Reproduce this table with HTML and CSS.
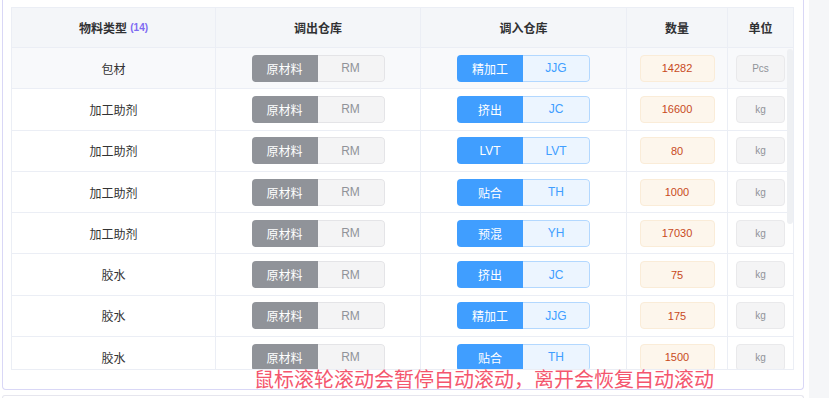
FILE: index.html
```html
<!DOCTYPE html>
<html lang="zh-CN">
<head>
<meta charset="utf-8">
<title>物料调拨</title>
<link rel="stylesheet" href="styles.css">
</head>
<body>
<div class="page">
  <div class="main">
    <section class="panel">
      <div class="table">
        <div class="thead">
          <div class="th">物料类型 <span class="count">(14)</span></div>
          <div class="th">调出仓库</div>
          <div class="th">调入仓库</div>
          <div class="th">数量</div>
          <div class="th">单位</div>
        </div>
        <div class="tbody">
          <div class="tr hover">
            <div class="td">包材</div>
            <div class="td"><span class="pair gray"><span class="l">原材料</span><span class="r">RM</span></span></div>
            <div class="td"><span class="pair blue"><span class="l">精加工</span><span class="r">JJG</span></span></div>
            <div class="td"><span class="qty">14282</span></div>
            <div class="td"><span class="unit">Pcs</span></div>
          </div>
          <div class="tr">
            <div class="td">加工助剂</div>
            <div class="td"><span class="pair gray"><span class="l">原材料</span><span class="r">RM</span></span></div>
            <div class="td"><span class="pair blue"><span class="l">挤出</span><span class="r">JC</span></span></div>
            <div class="td"><span class="qty">16600</span></div>
            <div class="td"><span class="unit">kg</span></div>
          </div>
          <div class="tr">
            <div class="td">加工助剂</div>
            <div class="td"><span class="pair gray"><span class="l">原材料</span><span class="r">RM</span></span></div>
            <div class="td"><span class="pair blue"><span class="l">LVT</span><span class="r">LVT</span></span></div>
            <div class="td"><span class="qty">80</span></div>
            <div class="td"><span class="unit">kg</span></div>
          </div>
          <div class="tr">
            <div class="td">加工助剂</div>
            <div class="td"><span class="pair gray"><span class="l">原材料</span><span class="r">RM</span></span></div>
            <div class="td"><span class="pair blue"><span class="l">贴合</span><span class="r">TH</span></span></div>
            <div class="td"><span class="qty">1000</span></div>
            <div class="td"><span class="unit">kg</span></div>
          </div>
          <div class="tr">
            <div class="td">加工助剂</div>
            <div class="td"><span class="pair gray"><span class="l">原材料</span><span class="r">RM</span></span></div>
            <div class="td"><span class="pair blue"><span class="l">预混</span><span class="r">YH</span></span></div>
            <div class="td"><span class="qty">17030</span></div>
            <div class="td"><span class="unit">kg</span></div>
          </div>
          <div class="tr">
            <div class="td">胶水</div>
            <div class="td"><span class="pair gray"><span class="l">原材料</span><span class="r">RM</span></span></div>
            <div class="td"><span class="pair blue"><span class="l">挤出</span><span class="r">JC</span></span></div>
            <div class="td"><span class="qty">75</span></div>
            <div class="td"><span class="unit">kg</span></div>
          </div>
          <div class="tr">
            <div class="td">胶水</div>
            <div class="td"><span class="pair gray"><span class="l">原材料</span><span class="r">RM</span></span></div>
            <div class="td"><span class="pair blue"><span class="l">精加工</span><span class="r">JJG</span></span></div>
            <div class="td"><span class="qty">175</span></div>
            <div class="td"><span class="unit">kg</span></div>
          </div>
          <div class="tr">
            <div class="td">胶水</div>
            <div class="td"><span class="pair gray"><span class="l">原材料</span><span class="r">RM</span></span></div>
            <div class="td"><span class="pair blue"><span class="l">贴合</span><span class="r">TH</span></span></div>
            <div class="td"><span class="qty">1500</span></div>
            <div class="td"><span class="unit">kg</span></div>
          </div>
          <div class="thumb"></div>
        </div>
      </div>
      <div class="hint">鼠标滚轮滚动会暂停自动滚动，离开会恢复自动滚动</div>
    </section>
    <div class="next"></div>
  </div>
  <aside class="side"></aside>
</div>
</body>
</html>
```

FILE: styles.css
```css
* { box-sizing: border-box; }

html, body {
  margin: 0;
  height: 398px;
  overflow: hidden;
  background: #ffffff;
  font-family: "Liberation Sans", "Noto Sans CJK SC", sans-serif;
  color: #303133;
}

.page {
  display: flex;
  height: 398px;
}

.main {
  width: 802px;
  margin-left: 2px;
  display: flex;
  flex-direction: column;
}

.side {
  width: 20px;
  margin-left: 5px;
  background: #f5f6f8;
}

.panel {
  height: 390px;
  flex: none;
  border: 1px solid #d9d7f6;
  border-top: none;
  border-radius: 0 0 4px 4px;
  padding: 7px 9px 0 8px;
  background: #fff;
}

.table {
  width: 783px;
  border: 1px solid #ebeef5;
  background: #fff;
}

.thead,
.tr {
  display: grid;
  grid-template-columns: 204px 205px 206px 101px 65px;
}

.thead {
  height: 40px;
  background: #f4f6f9;
  border-bottom: 1px solid #ebeef5;
}

.th {
  display: flex;
  align-items: center;
  justify-content: center;
  font-size: 12px;
  font-weight: bold;
  color: #303133;
  border-right: 1px solid #ebeef5;
  white-space: pre;
}

.th:last-child,
.td:last-child { border-right: none; }

.count {
  font-size: 10px;
  font-weight: bold;
  color: #7e6af2;
}

.tbody {
  position: relative;
  height: 321px;
  overflow: hidden;
}

.tr {
  height: 41.3px;
  border-bottom: 1px solid #ebeef5;
}

.tr.hover { background: #f8f9fb; }

.td {
  display: flex;
  align-items: center;
  justify-content: center;
  font-size: 12px;
  color: #333;
  border-right: 1px solid #ebeef5;
}

.pair {
  display: inline-flex;
  height: 27px;
  border-radius: 4px;
  overflow: hidden;
  font-size: 12px;
}

.pair .l,
.pair .r {
  display: flex;
  align-items: center;
  justify-content: center;
}

.pair .l { width: 66px; color: #fff; }
.pair .r { width: 67px; border: 1px solid; border-left: none; border-radius: 0 4px 4px 0; }

.pair.gray .l { background: #909399; }
.pair.gray .r { background: #f4f4f5; border-color: #e4e4e7; color: #909399; }

.pair.blue .l { background: #409eff; }
.pair.blue .r { background: #ecf5ff; border-color: #b3d8ff; color: #409eff; }

.qty {
  display: flex;
  align-items: center;
  justify-content: center;
  width: 75px;
  height: 27px;
  border: 1px solid #faecd8;
  border-radius: 4px;
  background: #fdf6ec;
  color: #c84a1c;
  font-size: 11px;
}

.unit {
  display: flex;
  align-items: center;
  justify-content: center;
  width: 49px;
  height: 27px;
  border: 1px solid #e9e9eb;
  border-radius: 4px;
  background: #f4f4f5;
  color: #909399;
  font-size: 10px;
}

.thumb {
  position: absolute;
  top: 1px;
  right: 0;
  width: 6px;
  height: 175px;
  border-radius: 3px;
  background: #eef0f3;
}

.hint {
  height: 20px;
  padding-left: 243px;
  font-size: 20px;
  line-height: 20px;
  color: #f4566e;
  white-space: nowrap;
}

.next {
  flex: 1;
  margin-top: 5px;
  border: 1px solid #e6e6ee;
  border-bottom: none;
  border-radius: 4px 4px 0 0;
  background: #fff;
}
```
